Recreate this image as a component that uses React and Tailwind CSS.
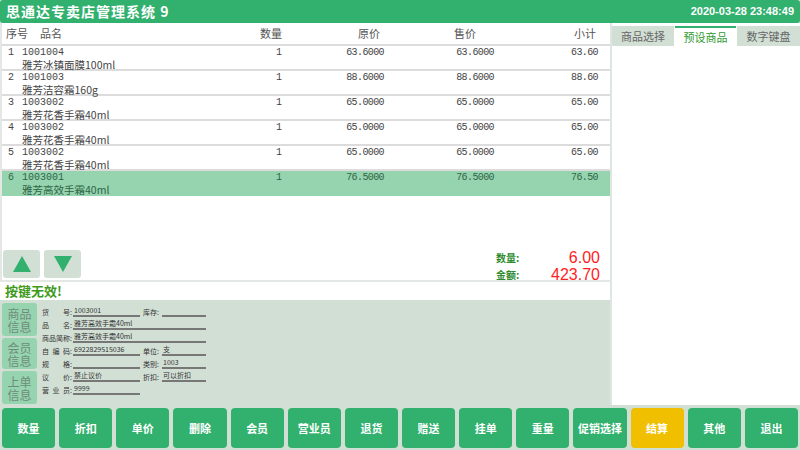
import React from "react";

const rows = [
  { no: 1, code: "1001004", name: "雅芳冰镇面膜100ml", qty: "1", orig: "63.6000", sale: "63.6000", sub: "63.60" },
  { no: 2, code: "1001003", name: "雅芳洁容霜160g", qty: "1", orig: "88.6000", sale: "88.6000", sub: "88.60" },
  { no: 3, code: "1003002", name: "雅芳花香手霜40ml", qty: "1", orig: "65.0000", sale: "65.0000", sub: "65.00" },
  { no: 4, code: "1003002", name: "雅芳花香手霜40ml", qty: "1", orig: "65.0000", sale: "65.0000", sub: "65.00" },
  { no: 5, code: "1003002", name: "雅芳花香手霜40ml", qty: "1", orig: "65.0000", sale: "65.0000", sub: "65.00" },
  { no: 6, code: "1003001", name: "雅芳高效手霜40ml", qty: "1", orig: "76.5000", sale: "76.5000", sub: "76.50" },
];

const buttons = ["数量", "折扣", "单价", "删除", "会员", "营业员", "退货", "赠送", "挂单", "重量", "促销选择", "结算", "其他", "退出"];

const cjk = { fontFamily: '"Noto Sans CJK SC", sans-serif' };
const mono = { fontFamily: '"Liberation Mono", "Noto Sans CJK SC", monospace' };

const Label = ({ parts, w = "w-[31px]" }) => (
  <span className={`${w} flex justify-between text-[7px] leading-[9px] text-[#333] pr-[1px]`}>
    {parts.map((p, i) => (
      <span key={i}>{p}</span>
    ))}
  </span>
);

const Field = ({ parts, value, width = "w-[67px]" }) => (
  <div className="flex items-end h-[13px]">
    <Label parts={parts} />
    <span className={`${width} border-b-2 border-[#777] text-[7px] leading-[9px] text-[#333] pl-[1px] whitespace-nowrap overflow-hidden`}>
      {value}
    </span>
  </div>
);

const Field2 = ({ parts, value }) => (
  <div className="flex items-end h-[13px] ml-[3px]">
    <Label parts={parts} w="w-[19px]" />
    <span className="w-[44px] border-b-2 border-[#777] text-[7px] leading-[9px] text-[#333] pl-[1px] whitespace-nowrap">
      {value}
    </span>
  </div>
);

export default function App() {
  return (
    <div className="w-[800px] h-[450px] bg-[#d2dfd5] flex flex-col overflow-hidden" style={cjk}>
      {/* title bar */}
      <div className="h-[23px] bg-[#31b06e] rounded-[3px] flex items-center justify-between px-[6px] text-white font-bold">
        <span className="text-[14px] tracking-[1px]">思通达专卖店管理系统 9</span>
        <span className="text-[11px]" style={{ fontFamily: '"Liberation Sans", sans-serif' }}>
          2020-03-28 23:48:49
        </span>
      </div>

      <div className="flex h-[382px]">
        {/* left column */}
        <div className="w-[610px] flex flex-col">
          <div className="flex-1 bg-white border-l-2 border-[#e4e8e5] flex flex-col">
            <div className="h-[23px] flex items-center text-[11px] text-[#555] border-b-2 border-[#dcdcdc]">
              <span className="w-[38px] pl-[4px]">序号</span>
              <span className="w-[200px]">品名</span>
              <span className="w-[42px] text-right">数量</span>
              <span className="w-[98px] text-right">原价</span>
              <span className="w-[96px] text-right">售价</span>
              <span className="w-[120px] text-right">小计</span>
            </div>
            {rows.map((r) => (
              <div
                key={r.no}
                className={`h-[25px] flex pt-[1px] border-b-2 ${r.no === 6 ? "bg-[#96d4b0] text-[#2f6444] border-[#96d4b0]" : "text-[#444] border-[#dcdcdc]"}`}
              >
                <span className="w-[20px] pl-[6px] text-[10px] leading-[12px]" style={mono}>{r.no}</span>
                <div className="w-[252px] flex flex-col">
                  <span className="text-[10px] leading-[12px]" style={mono}>{r.code}</span>
                  <span className="text-[10.5px] leading-[12px]">{r.name}</span>
                </div>
                <span className="w-[8px] text-right text-[10px] leading-[12px]" style={mono}>{r.qty}</span>
                <span className="w-[102px] text-right text-[10px] leading-[12px] tracking-[-0.6px]" style={mono}>{r.orig}</span>
                <span className="w-[110px] text-right text-[10px] leading-[12px] tracking-[-0.6px]" style={mono}>{r.sale}</span>
                <span className="w-[104px] text-right text-[10px] leading-[12px] tracking-[-0.6px]" style={mono}>{r.sub}</span>
              </div>
            ))}
            <div className="flex-1" />
            <div className="h-[31px] flex items-start justify-between pr-[10px]">
              <div className="flex gap-[4px] pl-[1px] pt-[1px]">
                <button className="w-[37px] h-[28px] bg-[#d2dfd5] rounded-[3px] flex items-center justify-center">
                  <svg width="18" height="16" viewBox="0 0 18 16"><polygon points="9,0 18,16 0,16" fill="#31b06e" /></svg>
                </button>
                <button className="w-[37px] h-[28px] bg-[#d2dfd5] rounded-[3px] flex items-center justify-center">
                  <svg width="18" height="16" viewBox="0 0 18 16"><polygon points="0,0 18,0 9,16" fill="#31b06e" /></svg>
                </button>
              </div>
              <div className="flex flex-col">
                <div className="flex items-center h-[17px]">
                  <span className="w-[70px] text-[10px] font-bold text-[#2e8b2e]">数量:</span>
                  <span className="w-[34px] text-right text-[16px] text-[#ff1e1e]" style={{ fontFamily: '"Liberation Sans", sans-serif' }}>6.00</span>
                </div>
                <div className="flex items-center h-[17px]">
                  <span className="w-[55px] text-[10px] font-bold text-[#2e8b2e]">金额:</span>
                  <span className="w-[49px] text-right text-[16px] text-[#ff1e1e]" style={{ fontFamily: '"Liberation Sans", sans-serif' }}>423.70</span>
                </div>
              </div>
            </div>
          </div>
          {/* message */}
          <div className="h-[20px] bg-white border-t-2 border-[#e4e8e5] flex items-center pl-[5px]">
            <span className="text-[13px] font-bold text-[#3f9a1c]">按键无效!</span>
          </div>
          {/* info panel */}
          <div className="h-[105px] bg-[#d2dfd5] flex pl-[2px] pt-[3px] gap-[5px]">
            <div className="flex flex-col gap-[2px]">
              {["商品", "会员", "上单"].map((t, i) => (
                <div
                  key={t}
                  className={`w-[35px] ${i === 1 ? "h-[31px]" : "h-[33px]"} bg-[#96d4b0] rounded-[3px] flex items-center justify-center`}
                >
                  <span className="text-[12px] leading-[13px] text-[#6f8c79] text-center whitespace-pre-line">
                    {t + "\n信息"}
                  </span>
                </div>
              ))}
            </div>
            <div className="flex flex-col pt-[1px]">
              <div className="flex">
                <Field parts={["货", "号:"]} value="1003001" />
                <Field2 parts={["库存:"]} value="" />
              </div>
              <Field parts={["品", "名:"]} value="雅芳高效手霜40ml" width="w-[133px]" />
              <Field parts={["商品简称:"]} value="雅芳高效手霜40ml" width="w-[133px]" />
              <div className="flex">
                <Field parts={["自", "编", "码:"]} value="6922829515036" />
                <Field2 parts={["单位:"]} value="支" />
              </div>
              <div className="flex">
                <Field parts={["规", "格:"]} value="" />
                <Field2 parts={["类别:"]} value="1003" />
              </div>
              <div className="flex">
                <Field parts={["议", "价:"]} value="禁止议价" />
                <Field2 parts={["折扣:"]} value="可以折扣" />
              </div>
              <Field parts={["营", "业", "员:"]} value="9999" />
            </div>
          </div>
        </div>

        {/* right column */}
        <div className="flex-1 bg-white border-l-2 border-[#dfe5e1] flex flex-col">
          <div className="h-[3px]" />
          <div className="h-[20px] flex text-[11px] gap-[1px]">
            <div className="w-[62px] bg-[#d2dfd5] text-[#666] flex items-center justify-center">商品选择</div>
            <div className="w-[61px] bg-white border-t-2 border-[#31b06e] text-[#2e9a2e] flex items-center justify-center">预设商品</div>
            <div className="flex-1 bg-[#d2dfd5] text-[#666] flex items-center justify-center">数字键盘</div>
          </div>
          <div className="flex-1 bg-white" />
        </div>
      </div>

      {/* bottom buttons */}
      <div className="flex-1 flex gap-[4px] px-[2px] pt-[3px] pb-[2px]">
        {buttons.map((b) => (
          <button
            key={b}
            className={`flex-1 rounded-[4px] text-white text-[11px] font-bold flex items-center justify-center ${b === "结算" ? "bg-[#f0bf00]" : "bg-[#31b06e]"}`}
            style={cjk}
          >
            {b}
          </button>
        ))}
      </div>
    </div>
  );
}
